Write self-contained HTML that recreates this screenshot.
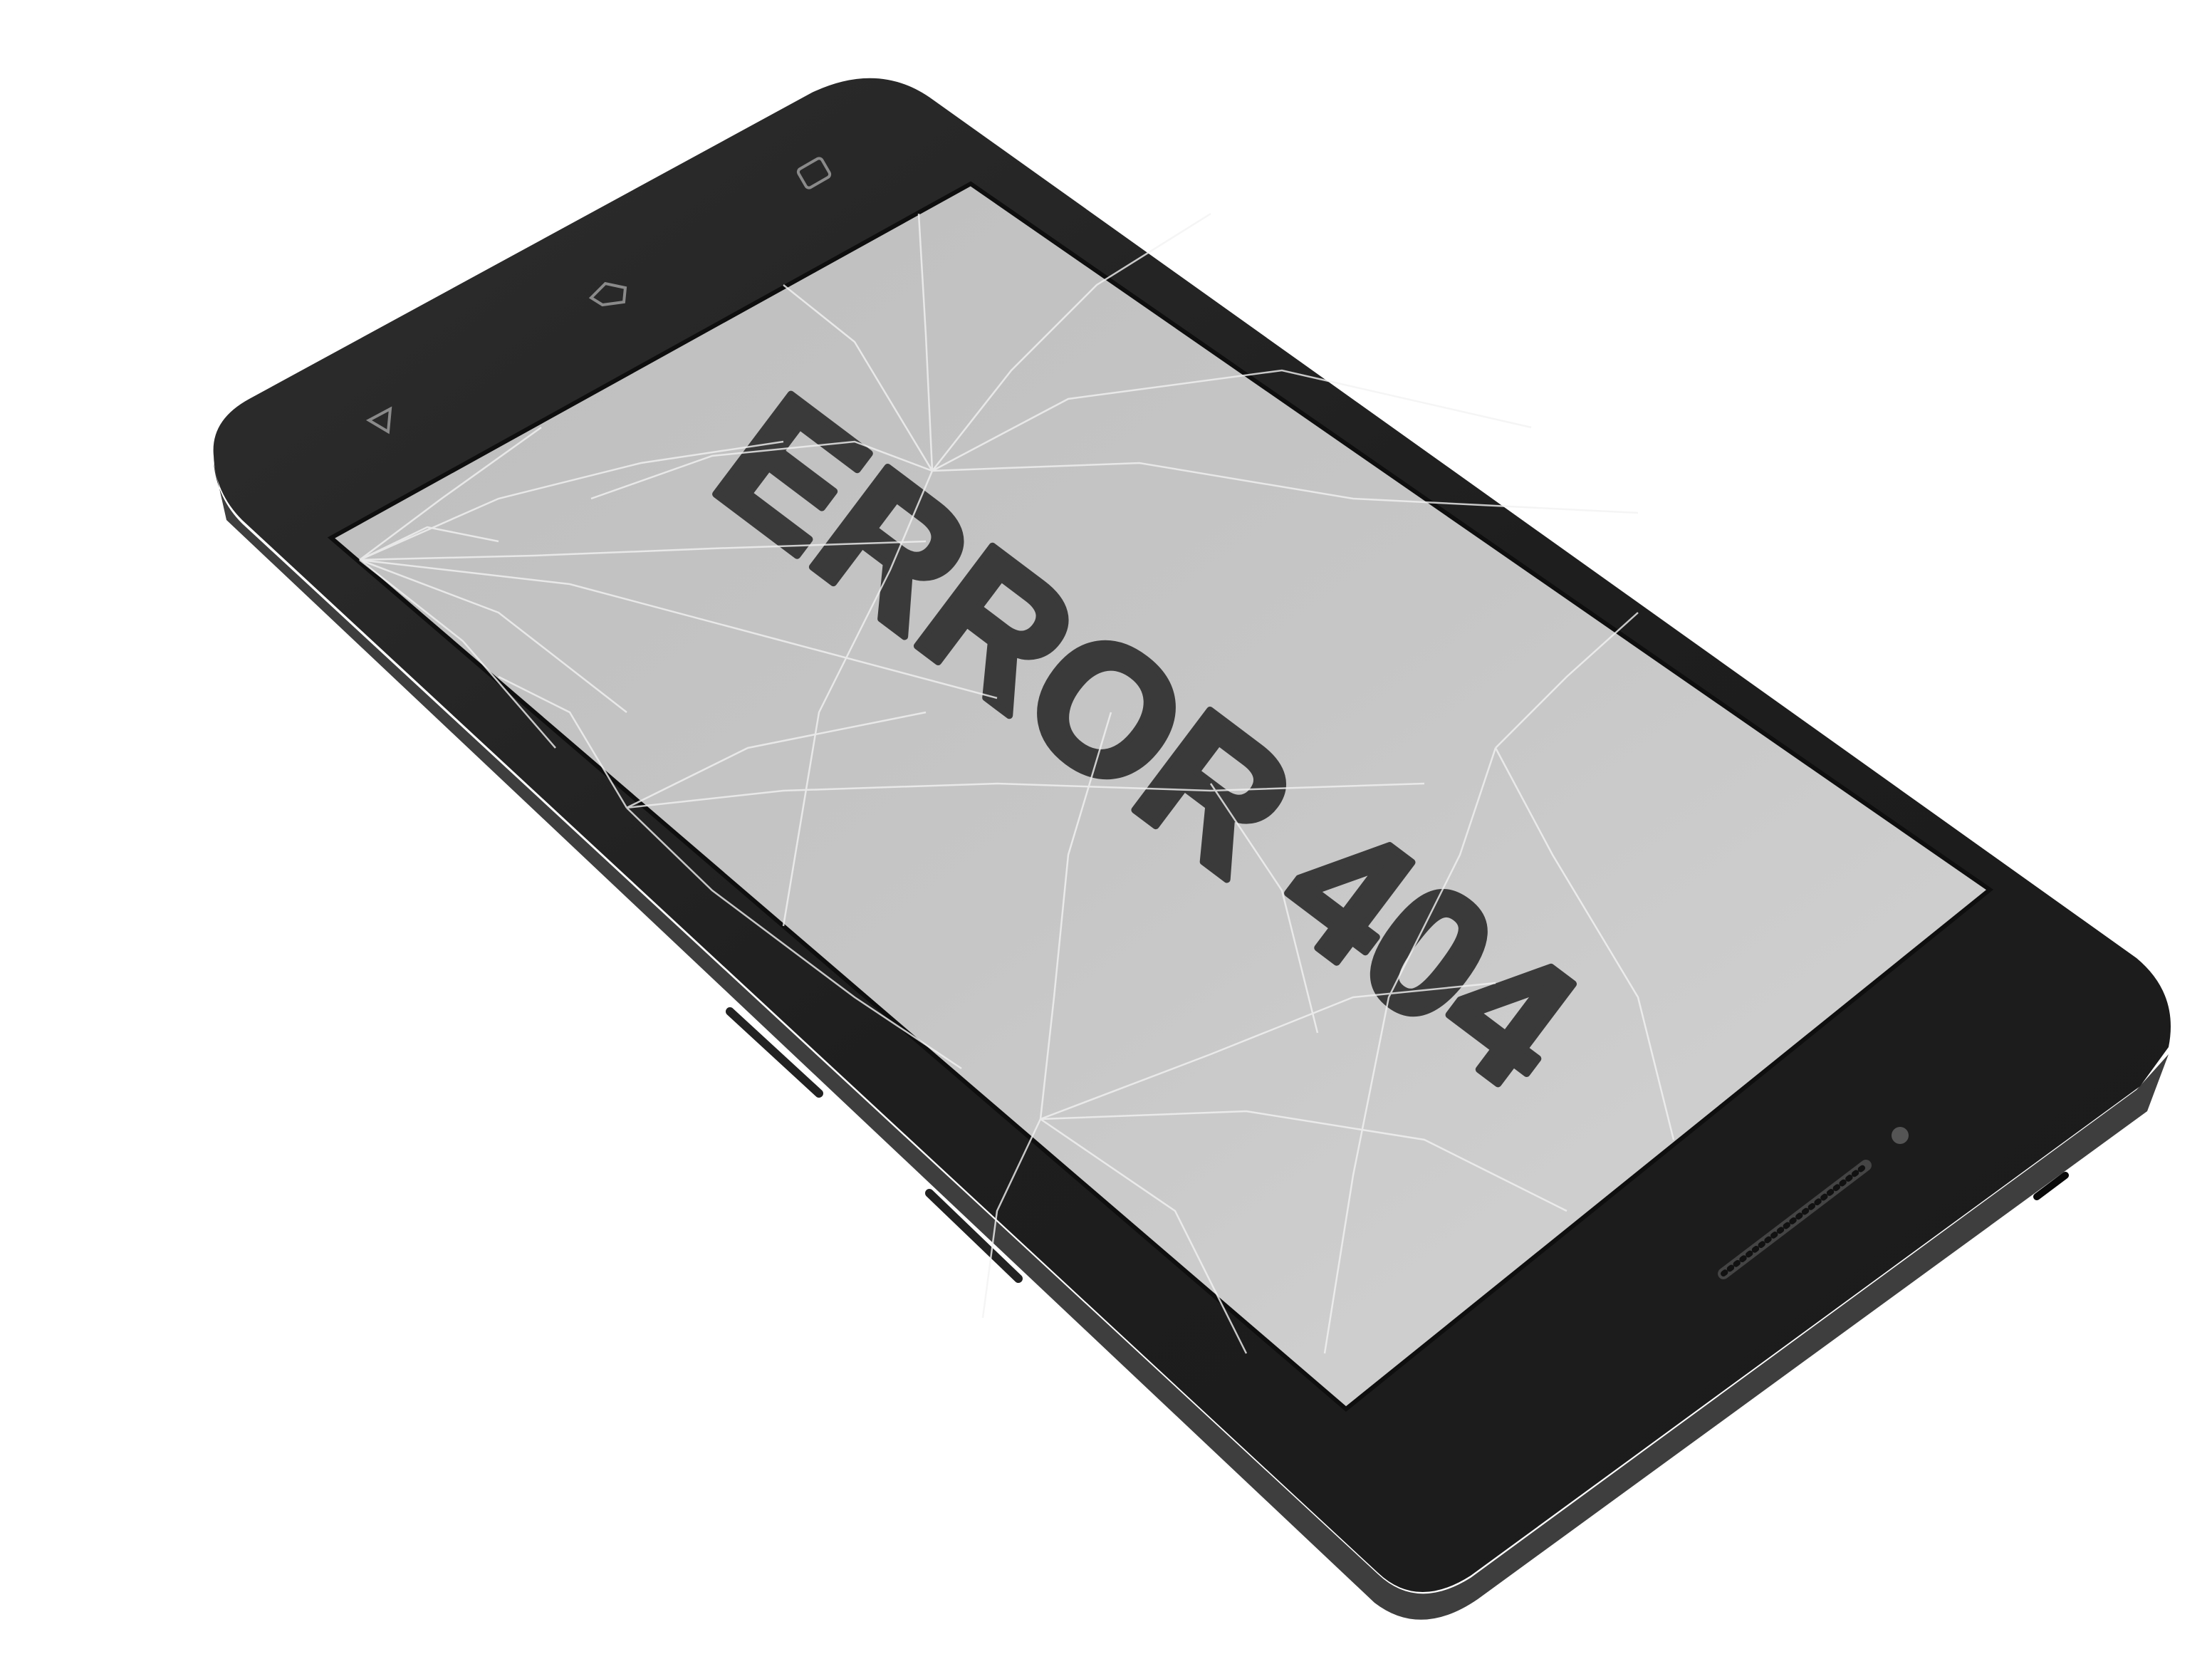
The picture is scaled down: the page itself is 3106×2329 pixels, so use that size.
<!DOCTYPE html>
<html><head><meta charset="utf-8"><style>
html,body{margin:0;padding:0;background:#fff;}
body{width:3106px;height:2329px;overflow:hidden;position:relative;}
svg{position:absolute;left:0;top:0;}
</style></head><body>
<svg width="3106" height="2329" viewBox="0 0 3106 2329" xmlns="http://www.w3.org/2000/svg">
<defs>
<linearGradient id="scr" x1="0" y1="0" x2="1" y2="1">
<stop offset="0" stop-color="#bebebe"/><stop offset="0.5" stop-color="#c6c6c6"/><stop offset="1" stop-color="#d4d4d4"/>
</linearGradient>
<linearGradient id="bez" x1="0" y1="0" x2="1" y2="1">
<stop offset="0" stop-color="#2e2e2e"/><stop offset="0.5" stop-color="#1e1e1e"/><stop offset="1" stop-color="#1a1a1a"/>
</linearGradient>
</defs>
<!-- side -->
<path d="M300,650 L318,730 L1930,2250 Q1995,2300 2075,2245 L3015,1560 L3045,1480 L3000,1530 L2065,2215 Q1990,2262 1935,2210 L340,735 Q305,700 300,650 Z" fill="#3e3e3e"/>
<!-- face -->
<path d="M300,640 Q295,590 350,560 L1140,130 Q1235,85 1310,140 L3000,1345 Q3060,1395 3045,1470 L3005,1525 L2065,2212 Q1990,2260 1935,2208 L340,730 Q302,692 300,640 Z" fill="url(#bez)"/>
<!-- screen -->
<polygon points="1363,258 2794,1249 1890,1978 465,755" fill="url(#scr)" stroke="#0e0e0e" stroke-width="6"/>
<!-- text -->
<text x="0" y="0" transform="translate(1610,1040) rotate(37)" text-anchor="middle" dominant-baseline="central" font-family="'Liberation Sans', Arial, sans-serif" font-weight="700" font-size="255" fill="#3a3a3a" stroke="#3a3a3a" stroke-width="10" stroke-linejoin="round">ERROR 404</text>
<!-- nav buttons -->
<g fill="none" stroke="#8a8a8a" stroke-width="4">
<rect x="1124" y="228" width="38" height="30" rx="5" transform="rotate(-30 1143 243)"/>
<path d="M830,418 L850,398 L878,404 L876,424 L846,428 Z"/>
<path d="M518,590 L548,574 L545,606 Z"/>
</g>
<!-- camera and speaker -->
<circle cx="2668" cy="1594" r="12" fill="#555"/>
<path d="M2420,1788 L2620,1636" stroke="#444" stroke-width="16" stroke-linecap="round"/>
<path d="M2420,1788 L2620,1636" stroke="#111" stroke-width="8" stroke-linecap="round" stroke-dasharray="3 8"/>
<!-- side buttons -->
<path d="M1025,1420 L1150,1535" stroke="#222" stroke-width="12" stroke-linecap="round"/>
<path d="M1305,1675 L1430,1795" stroke="#222" stroke-width="12" stroke-linecap="round"/>
<path d="M2860,1680 L2900,1650" stroke="#0a0a0a" stroke-width="10" stroke-linecap="round"/>
<!-- cracks -->
<g fill="none" stroke="#f2f2f2" stroke-width="2.5" opacity="0.8">
<path d="M505,786 L700,700 L900,650 L1100,620"/>
<path d="M505,786 L750,780 L1000,770 L1300,760"/>
<path d="M505,786 L700,860 L880,1000"/>
<path d="M505,786 L650,900 L780,1050"/>
<path d="M505,786 L620,700 L760,600"/>
<path d="M505,786 L800,820 L1100,900 L1400,980"/>
<path d="M505,786 L600,740 L700,760"/>
<path d="M1309,661 L1200,480 L1100,400"/>
<path d="M1309,661 L1500,560 L1800,520 L2150,600"/>
<path d="M1309,661 L1600,650 L1900,700 L2300,720"/>
<path d="M1309,661 L1250,800 L1150,1000 L1100,1300"/>
<path d="M1309,661 L1420,520 L1540,400 L1700,300"/>
<path d="M1309,661 L1300,470 L1290,300"/>
<path d="M1309,661 L1200,620 L1000,640 L830,700"/>
<path d="M880,1134 L1100,1110 L1400,1100 L1700,1110 L2000,1100"/>
<path d="M880,1134 L1000,1250 L1200,1400 L1350,1500"/>
<path d="M880,1134 L800,1000 L700,950"/>
<path d="M880,1134 L1050,1050 L1300,1000"/>
<path d="M1461,1571 L1700,1480 L1900,1400 L2100,1380"/>
<path d="M1461,1571 L1750,1560 L2000,1600 L2200,1700"/>
<path d="M1461,1571 L1400,1700 L1380,1850"/>
<path d="M1461,1571 L1480,1400 L1500,1200 L1560,1000"/>
<path d="M1461,1571 L1650,1700 L1750,1900"/>
<path d="M2100,1050 L2050,1200 L1950,1400 L1900,1650 L1860,1900"/>
<path d="M2100,1050 L2180,1200 L2300,1400 L2350,1600"/>
<path d="M2100,1050 L2200,950 L2300,860"/>
<path d="M1700,1100 L1800,1250 L1850,1450"/>
</g>
</svg>
</body></html>
